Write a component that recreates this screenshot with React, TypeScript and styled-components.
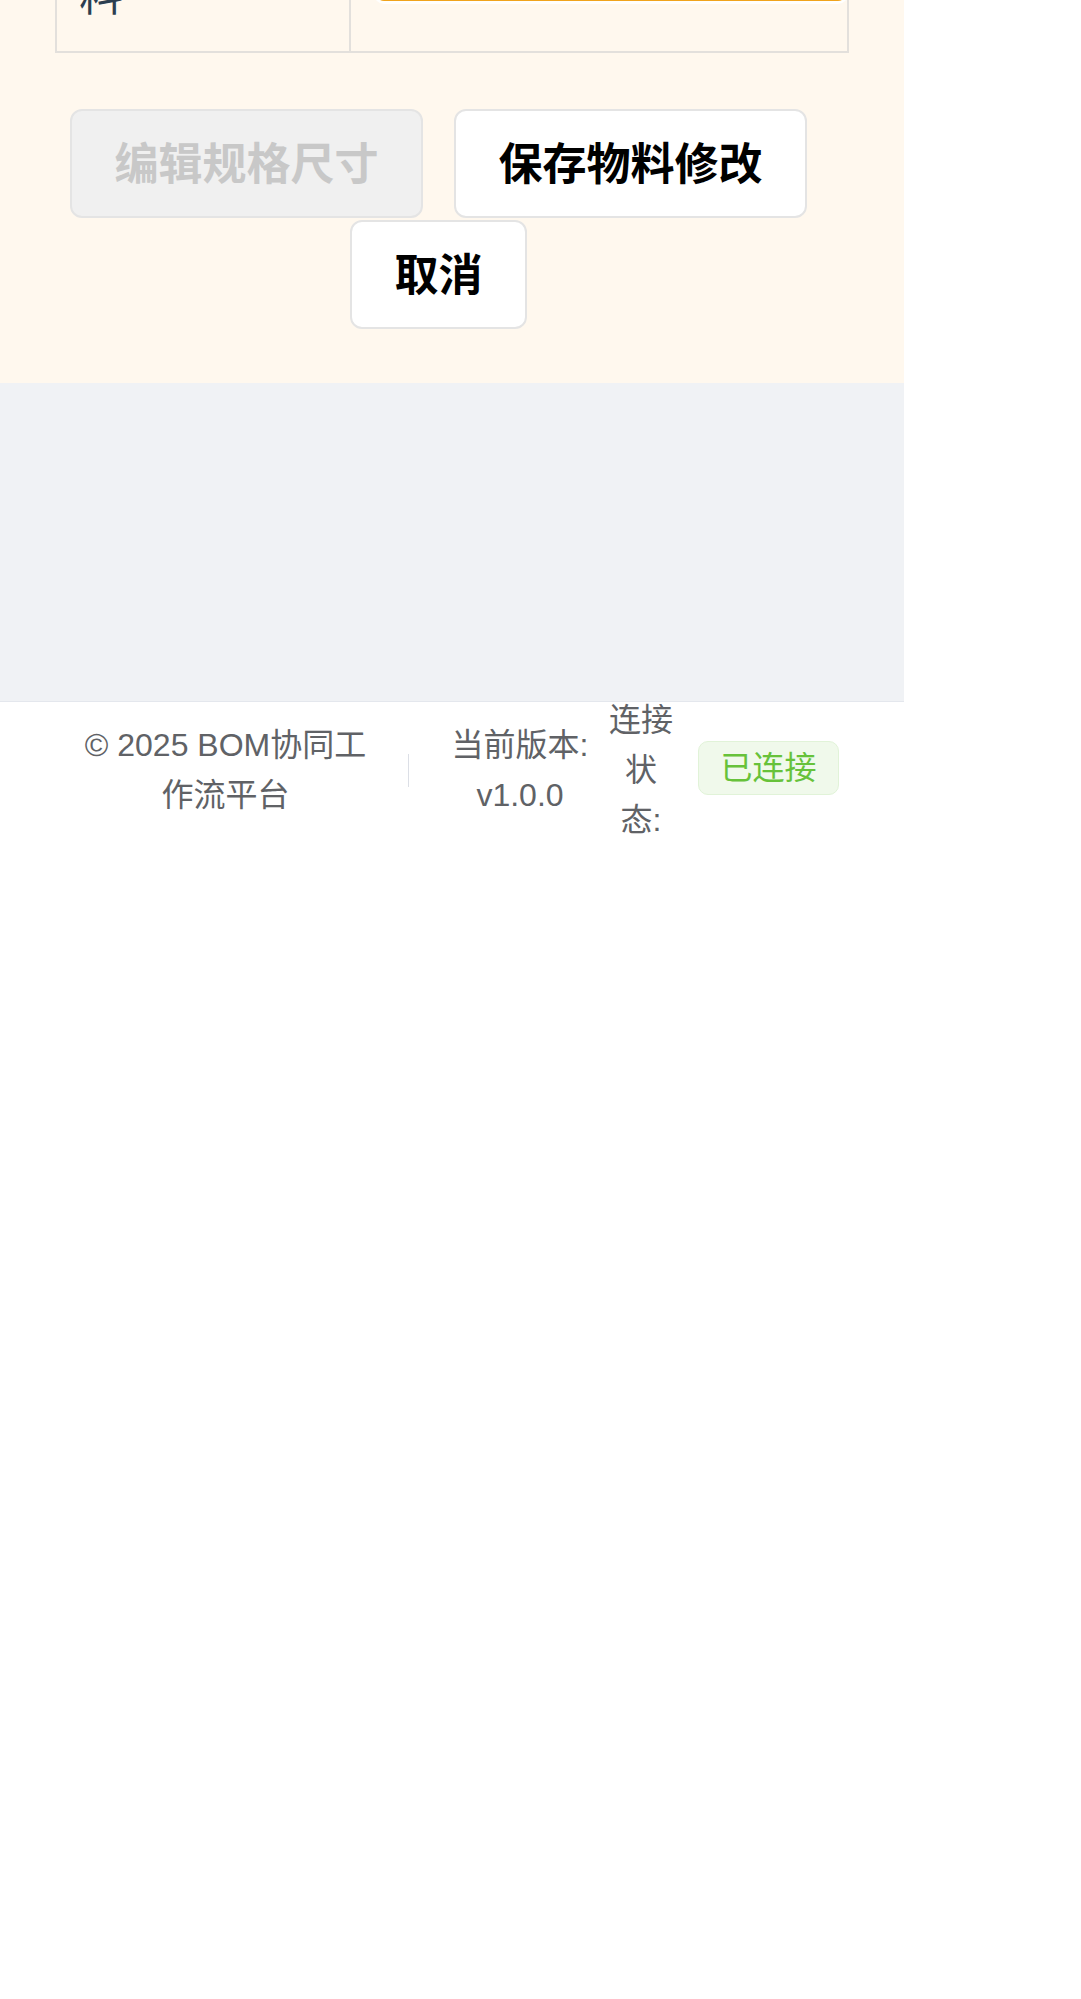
import React from 'react';
import styled, { createGlobalStyle } from 'styled-components';

const GlobalStyle = createGlobalStyle`
    html, body {
        margin: 0;
        padding: 0;
        background: #ffffff;
    }
    body {
        font-family: "Liberation Sans", "Noto Sans CJK SC", sans-serif;
    }
`;

const App = () => {
    return (
        <Page>
            <GlobalStyle />
            <EditPanel>
                <SpecTable>
                    <SpecRow>
                        <LabelCell>料</LabelCell>
                        <ValueCell>
                            <FocusedInput />
                        </ValueCell>
                    </SpecRow>
                </SpecTable>

                <ActionBar>
                    <ActionButton disabled>编辑规格尺寸</ActionButton>
                    <ActionButton>保存物料修改</ActionButton>
                    <ActionButton>取消</ActionButton>
                </ActionBar>
            </EditPanel>

            <EmptyArea />

            <Footer>
                <Copyright>© 2025 BOM协同工作流平台</Copyright>
                <Divider />
                <Version>当前版本: v1.0.0</Version>
                <StatusLabel>连接状态:</StatusLabel>
                <StatusTag>已连接</StatusTag>
            </Footer>
        </Page>
    );
};

export default App;

const Page = styled.div`
    width: 904px;
`;

const EditPanel = styled.section`
    background-color: #fff8ee;
    overflow: hidden;
    padding-bottom: 54px;
`;

const SpecTable = styled.div`
    margin: -36px 0 0 55px;
    width: 794px;
    box-sizing: border-box;
    border: 2px solid #e3e0dc;
    border-top: none;
`;

const SpecRow = styled.div`
    display: grid;
    grid-template-columns: 294px 1fr;
`;

const LabelCell = styled.div`
    padding: 0 22px 23px;
    font-size: 44px;
    line-height: 64px;
    color: #2c3e50;
    border-right: 2px solid #e3e0dc;
`;

const ValueCell = styled.div`
    padding: 0 1px 0 25px;
`;

const FocusedInput = styled.div`
    height: 37px;
    box-sizing: border-box;
    background: #ffffff;
    border: 1.5px solid #f0a31c;
    border-top: none;
    border-radius: 0 0 8px 8px;
    box-shadow: 0 1px 0 2px rgba(255, 255, 255, 0.9);
`;

const ActionBar = styled.div`
    margin: 56px 0 0 55px;
    width: 767px;
    display: flex;
    flex-wrap: wrap;
    justify-content: center;
    column-gap: 31px;
    row-gap: 2px;
`;

const ActionButton = styled.button`
    font-family: "Liberation Sans", "Noto Sans CJK SC", sans-serif;
    font-size: 44px;
    font-weight: 700;
    line-height: 64px;
    padding: 21.5px 42.5px 19.5px;
    border: 2px solid #e4e4e4;
    border-radius: 12px;
    background-color: #ffffff;
    color: #000000;
    cursor: pointer;

    &:disabled {
        background-color: #f0f0f0;
        color: #c8c8c8;
        cursor: not-allowed;
    }
`;

const EmptyArea = styled.div`
    height: 318px;
    background-color: #f0f2f5;
`;

const Footer = styled.footer`
    height: 136px;
    border-top: 1px solid #e4e7ed;
    background-color: #ffffff;
    display: flex;
    align-items: center;
    padding-left: 76px;
    font-size: 32px;
    line-height: 50px;
    color: #606266;
`;

const Copyright = styled.div`
    width: 299px;
    text-align: center;
    flex-shrink: 0;
`;

const Divider = styled.div`
    width: 1px;
    height: 33px;
    margin-left: 33px;
    background-color: #dcdfe6;
    flex-shrink: 0;
`;

const Version = styled.div`
    width: 140px;
    margin-left: 41px;
    text-align: center;
    flex-shrink: 0;
`;

const StatusLabel = styled.div`
    width: 66px;
    margin-left: 18px;
    text-align: center;
    flex-shrink: 0;
`;

const StatusTag = styled.span`
    margin-left: 24px;
    padding: 0 21.5px;
    height: 52px;
    line-height: 52px;
    border: 1px solid #e1f3d8;
    border-radius: 10px;
    background-color: #f0f9eb;
    color: #67c23a;
    flex-shrink: 0;
    transform: translateY(-2px);
`;
